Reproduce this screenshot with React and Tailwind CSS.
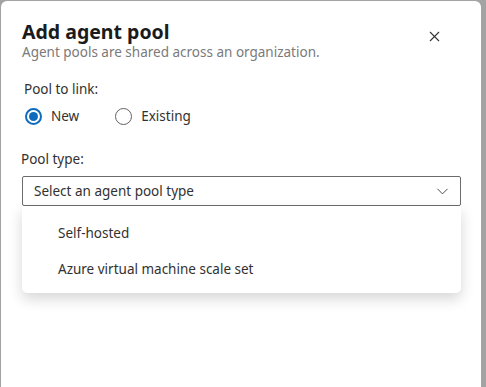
import { FiX, FiChevronDown } from 'react-icons/fi'

const font = { fontFamily: '"Noto Sans", "Open Sans", sans-serif' }

const Radio = ({ checked, label }) => (
  <label className="flex items-center gap-[9px] text-[13.5px] text-[#323130]">
    <span
      className={`flex h-[17px] w-[17px] items-center justify-center rounded-full border ${
        checked ? 'border-[#0f6cbd] border-[2px]' : 'border-[#616161]'
      }`}
    >
      {checked && <span className="h-[9px] w-[9px] rounded-full bg-[#0f6cbd]" />}
    </span>
    {label}
  </label>
)

export default function App() {
  return (
    <div
      className="h-[387px] w-[486px] overflow-hidden bg-[#a3a3a3] pl-px pt-px"
      style={font}
    >
      {/* Dialog */}
      <div className="h-[400px] w-[480px] rounded-t-[6px] bg-white px-[20px] pt-[19px]">
        <div className="flex items-start justify-between">
          <div className="pl-[1px]">
            <h1 className="text-[19.5px] font-bold leading-[24px] text-[#1b1b1b]">Add agent pool</h1>
            <p className="text-[13.5px] leading-[16px] text-[#7a7a7a]">
              Agent pools are shared across an organization.
            </p>
          </div>
          <button className="mr-[18px] mt-[8px] text-[#333]">
            <FiX className="h-[17px] w-[17px]" strokeWidth={1.5} />
          </button>
        </div>

        <div className="mt-[19px] pl-[3px]">
          <div className="text-[13.5px] leading-[20px] text-[#323130]">Pool to link:</div>
          <div className="mt-[7px] flex items-center gap-[36px] pl-[1px]">
            <Radio checked label="New" />
            <Radio label="Existing" />
          </div>
        </div>

        <div className="mt-[23px] text-[13.5px] leading-[20px] text-[#323130]">Pool type:</div>

        {/* Select with open menu */}
        <div className="mt-[7px] w-[440px] pl-px">
          <div className="flex h-[30px] items-center justify-between rounded-[2px] border border-[#6b6b6b] pl-[11px] pr-[8px] text-[13.5px] text-[#323130]">
            <span>Select an agent pool type</span>
            <FiChevronDown className="h-[19px] w-[19px] text-[#444]" strokeWidth={1.2} />
          </div>
          <div className="rounded-b-[5px] bg-white pb-[6px] pt-[9px] shadow-[0_6px_14px_rgba(0,0,0,0.16)]">
            <div className="flex h-[36px] items-center pl-[36px] text-[13.5px] text-[#323130]">Self-hosted</div>
            <div className="flex h-[36px] items-center pl-[36px] text-[13.5px] text-[#323130]">
              Azure virtual machine scale set
            </div>
          </div>
        </div>
      </div>
    </div>
  )
}
